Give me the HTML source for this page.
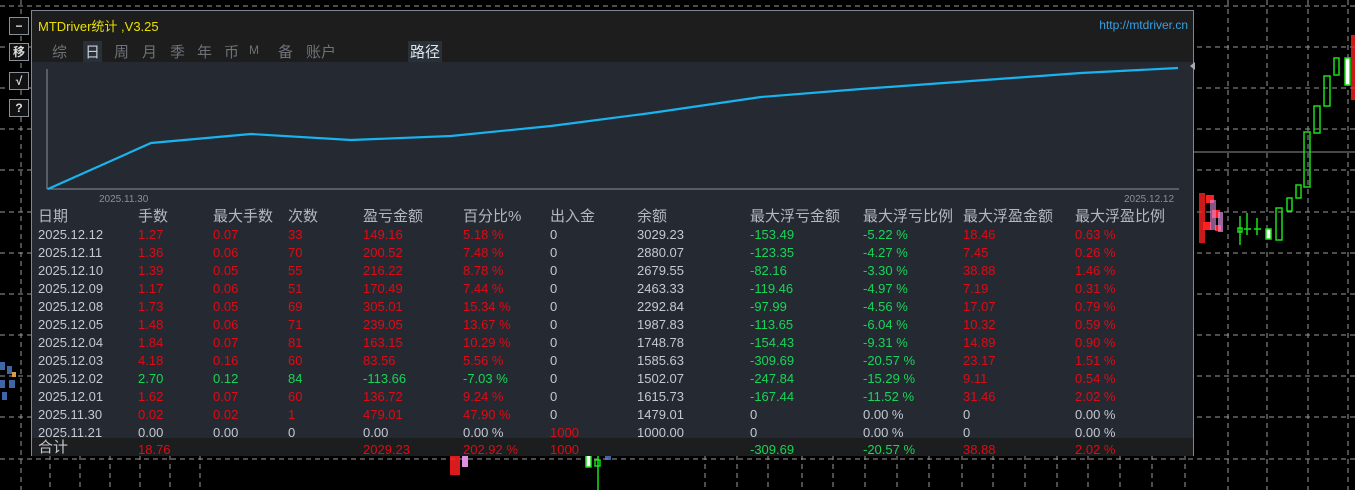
<!DOCTYPE html>
<html><head><meta charset="utf-8">
<style>
*{margin:0;padding:0;box-sizing:border-box}
body{width:1355px;height:490px;background:#000;position:relative;overflow:hidden;font-family:"Liberation Sans","Noto Sans CJK SC",sans-serif}
#bg{position:absolute;left:0;top:0}
.btn{position:absolute;left:9px;width:20px;height:18px;border:1px solid #8a9099;background:#111;color:#ddd;font-size:12px;text-align:center;line-height:16px;font-weight:bold}
#panel{position:absolute;left:31px;top:10px;width:1163px;height:446px;background:#252a32;border:1px solid #7e8894}
#hdr{position:absolute;left:0;top:0;width:100%;height:51px;background:#1d1d1e}
.title{position:absolute;left:6px;top:5px;color:#e8e000;font-size:13px}
.url{position:absolute;right:5px;top:7px;color:#3aa0e0;font-size:12px}
.tabs{position:absolute;left:0;top:30px;font-size:15px;color:#6e7278}
.tabs span{position:absolute;top:0;white-space:nowrap}
.sel{background:#2a3038;color:#c8ccd4;padding:0 2px}
.row{position:absolute;left:0;width:100%;height:18px;font-size:13px;line-height:18px}
.row span{position:absolute;top:0;white-space:nowrap}
.row span:nth-child(1){left:6px}.row span:nth-child(2){left:106px}.row span:nth-child(3){left:181px}
.row span:nth-child(4){left:256px}.row span:nth-child(5){left:331px}.row span:nth-child(6){left:431px}
.row span:nth-child(7){left:518px}.row span:nth-child(8){left:605px}.row span:nth-child(9){left:718px}
.row span:nth-child(10){left:831px}.row span:nth-child(11){left:931px}.row span:nth-child(12){left:1043px}
.h{font-size:15px;color:#b4b8c0}
.w{color:#c4c8d0}.r{color:#e00a14}.g{color:#18d458}
.tot{background:#1c1d1f}
</style></head><body>
<svg id="bg" width="1355" height="490">
<g stroke="#9a9a9a" stroke-width="1" stroke-dasharray="5,4">
<line x1="0" y1="6" x2="1355" y2="6"/><line x1="0" y1="47" x2="1355" y2="47"/><line x1="0" y1="88" x2="1355" y2="88"/><line x1="0" y1="129" x2="1355" y2="129"/><line x1="0" y1="170" x2="1355" y2="170"/><line x1="0" y1="212" x2="1355" y2="212"/><line x1="0" y1="253" x2="1355" y2="253"/><line x1="0" y1="294" x2="1355" y2="294"/><line x1="0" y1="335" x2="1355" y2="335"/><line x1="0" y1="376" x2="1355" y2="376"/><line x1="0" y1="417" x2="1355" y2="417"/><line x1="0" y1="459" x2="1355" y2="459"/>
<line x1="21" y1="0" x2="21" y2="490"/><line x1="1228" y1="0" x2="1228" y2="490"/><line x1="1267" y1="0" x2="1267" y2="490"/><line x1="1308" y1="0" x2="1308" y2="490"/><line x1="1348" y1="0" x2="1348" y2="490"/>
<line x1="705" y1="455" x2="705" y2="490"/><line x1="737" y1="455" x2="737" y2="490"/><line x1="768" y1="455" x2="768" y2="490"/><line x1="802" y1="455" x2="802" y2="490"/><line x1="833" y1="455" x2="833" y2="490"/><line x1="865" y1="455" x2="865" y2="490"/><line x1="897" y1="455" x2="897" y2="490"/><line x1="929" y1="455" x2="929" y2="490"/><line x1="962" y1="455" x2="962" y2="490"/><line x1="993" y1="455" x2="993" y2="490"/><line x1="1025" y1="455" x2="1025" y2="490"/><line x1="1057" y1="455" x2="1057" y2="490"/><line x1="1088" y1="455" x2="1088" y2="490"/><line x1="1120" y1="455" x2="1120" y2="490"/><line x1="1152" y1="455" x2="1152" y2="490"/><line x1="1185" y1="455" x2="1185" y2="490"/>
<line x1="50" y1="455" x2="50" y2="490"/><line x1="80" y1="455" x2="80" y2="490"/><line x1="110" y1="455" x2="110" y2="490"/><line x1="140" y1="455" x2="140" y2="490"/><line x1="170" y1="455" x2="170" y2="490"/><line x1="200" y1="455" x2="200" y2="490"/>
</g>
<line x1="1190" y1="152" x2="1355" y2="152" stroke="#8a8f96"/>
<g stroke="#19e019" fill="none" stroke-width="1.5">
<rect x="1238" y="228" width="4" height="4"/><line x1="1240" y1="216" x2="1240" y2="245"/>
<line x1="1247" y1="213" x2="1247" y2="235"/><line x1="1244" y1="229" x2="1251" y2="229"/>
<line x1="1257" y1="218" x2="1257" y2="235"/><line x1="1254" y1="229" x2="1261" y2="229"/>
<rect x="1266" y="229" width="5" height="10" fill="#fff"/>
<rect x="1276" y="208" width="6" height="32"/><rect x="1287" y="198" width="5" height="13"/><rect x="1296" y="185" width="5" height="13"/>
<rect x="1304" y="132" width="6" height="55"/><rect x="1314" y="106" width="6" height="27"/><rect x="1324" y="76" width="6" height="30"/><rect x="1334" y="58" width="5" height="17"/>
<rect x="1345" y="58" width="5" height="27" fill="#fff"/>
<rect x="586" y="455" width="5" height="12" fill="#fff"/><line x1="598" y1="455" x2="598" y2="490"/><rect x="595" y="460" width="5" height="6"/>
</g>
<g fill="#ff2020"><rect x="1199" y="193" width="6" height="50" opacity=".8"/><rect x="1206" y="195" width="8" height="8"/><rect x="1212" y="210" width="8" height="8"/><rect x="1203" y="222" width="8" height="8"/><rect x="1215" y="225" width="6" height="6"/><rect x="1351" y="35" width="4" height="65" opacity=".8"/><rect x="450" y="455" width="10" height="20" opacity=".85"/></g>
<g fill="#e090e0"><rect x="1210" y="200" width="6" height="30" opacity=".6"/><rect x="1218" y="212" width="5" height="20" opacity=".7"/><rect x="462" y="455" width="6" height="12"/></g>
<g fill="#5080d0" opacity=".8"><rect x="0" y="362" width="5" height="8"/><rect x="7" y="366" width="5" height="8"/><rect x="0" y="380" width="5" height="8"/><rect x="9" y="380" width="6" height="8"/><rect x="2" y="392" width="5" height="8"/><rect x="605" y="455" width="6" height="5"/></g>
<g fill="#d8a040"><rect x="12" y="372" width="4" height="5"/></g>
</svg>
<div class="btn" style="top:17px">−</div>
<div class="btn" style="top:43px;font-size:12px">移</div>
<div class="btn" style="top:72px">√</div>
<div class="btn" style="top:99px">?</div>

<div id="panel">
<div id="hdr">
<div class="title">MTDriver统计 ,V3.25</div>
<div class="url">http://mtdriver.cn</div>
<div class="tabs">
<span style="left:20px">综</span><span class="sel" style="left:51px">日</span><span style="left:82px">周</span><span style="left:110px">月</span><span style="left:138px">季</span><span style="left:165px">年</span><span style="left:192px">币</span><span style="left:217px;font-size:12px;top:2px">M</span><span style="left:246px">备</span><span style="left:274px">账户</span><span class="sel" style="left:376px;color:#e0e4ea">路径</span>
</div>
</div>
<svg style="position:absolute;left:0;top:51px" width="1163" height="150">
<line x1="15" y1="7" x2="15" y2="127" stroke="#8a8f96"/>
<line x1="15" y1="127" x2="1147" y2="127" stroke="#8a8f96"/>
<polyline fill="none" stroke="#18b4f0" stroke-width="2.2" points="16,127 119,81 219,72 319,78 419,74 519,64 619,51 729,35 829,27 939,19 1049,11 1146,6"/>
<polygon points="1163,0 1158,4 1163,8" fill="#aaa"/>
<text x="67" y="140" fill="#8a8f96" font-size="10" font-family="Liberation Sans">2025.11.30</text>
<text x="1092" y="140" fill="#8a8f96" font-size="10" font-family="Liberation Sans">2025.12.12</text>
</svg>
<div class="row h" style="top:197px"><span>日期</span><span>手数</span><span>最大手数</span><span>次数</span><span>盈亏金额</span><span>百分比%</span><span>出入金</span><span>余额</span><span>最大浮亏金额</span><span>最大浮亏比例</span><span>最大浮盈金额</span><span>最大浮盈比例</span></div>
<div class="row" style="top:215px"><span class="w">2025.12.12</span><span class="r">1.27</span><span class="r">0.07</span><span class="r">33</span><span class="r">149.16</span><span class="r">5.18 %</span><span class="w">0</span><span class="w">3029.23</span><span class="g">-153.49</span><span class="g">-5.22 %</span><span class="r">18.46</span><span class="r">0.63 %</span></div>
<div class="row" style="top:233px"><span class="w">2025.12.11</span><span class="r">1.36</span><span class="r">0.06</span><span class="r">70</span><span class="r">200.52</span><span class="r">7.48 %</span><span class="w">0</span><span class="w">2880.07</span><span class="g">-123.35</span><span class="g">-4.27 %</span><span class="r">7.45</span><span class="r">0.26 %</span></div>
<div class="row" style="top:251px"><span class="w">2025.12.10</span><span class="r">1.39</span><span class="r">0.05</span><span class="r">55</span><span class="r">216.22</span><span class="r">8.78 %</span><span class="w">0</span><span class="w">2679.55</span><span class="g">-82.16</span><span class="g">-3.30 %</span><span class="r">38.88</span><span class="r">1.46 %</span></div>
<div class="row" style="top:269px"><span class="w">2025.12.09</span><span class="r">1.17</span><span class="r">0.06</span><span class="r">51</span><span class="r">170.49</span><span class="r">7.44 %</span><span class="w">0</span><span class="w">2463.33</span><span class="g">-119.46</span><span class="g">-4.97 %</span><span class="r">7.19</span><span class="r">0.31 %</span></div>
<div class="row" style="top:287px"><span class="w">2025.12.08</span><span class="r">1.73</span><span class="r">0.05</span><span class="r">69</span><span class="r">305.01</span><span class="r">15.34 %</span><span class="w">0</span><span class="w">2292.84</span><span class="g">-97.99</span><span class="g">-4.56 %</span><span class="r">17.07</span><span class="r">0.79 %</span></div>
<div class="row" style="top:305px"><span class="w">2025.12.05</span><span class="r">1.48</span><span class="r">0.06</span><span class="r">71</span><span class="r">239.05</span><span class="r">13.67 %</span><span class="w">0</span><span class="w">1987.83</span><span class="g">-113.65</span><span class="g">-6.04 %</span><span class="r">10.32</span><span class="r">0.59 %</span></div>
<div class="row" style="top:323px"><span class="w">2025.12.04</span><span class="r">1.84</span><span class="r">0.07</span><span class="r">81</span><span class="r">163.15</span><span class="r">10.29 %</span><span class="w">0</span><span class="w">1748.78</span><span class="g">-154.43</span><span class="g">-9.31 %</span><span class="r">14.89</span><span class="r">0.90 %</span></div>
<div class="row" style="top:341px"><span class="w">2025.12.03</span><span class="r">4.18</span><span class="r">0.16</span><span class="r">60</span><span class="r">83.56</span><span class="r">5.56 %</span><span class="w">0</span><span class="w">1585.63</span><span class="g">-309.69</span><span class="g">-20.57 %</span><span class="r">23.17</span><span class="r">1.51 %</span></div>
<div class="row" style="top:359px"><span class="w">2025.12.02</span><span class="g">2.70</span><span class="g">0.12</span><span class="g">84</span><span class="g">-113.66</span><span class="g">-7.03 %</span><span class="w">0</span><span class="w">1502.07</span><span class="g">-247.84</span><span class="g">-15.29 %</span><span class="r">9.11</span><span class="r">0.54 %</span></div>
<div class="row" style="top:377px"><span class="w">2025.12.01</span><span class="r">1.62</span><span class="r">0.07</span><span class="r">60</span><span class="r">136.72</span><span class="r">9.24 %</span><span class="w">0</span><span class="w">1615.73</span><span class="g">-167.44</span><span class="g">-11.52 %</span><span class="r">31.46</span><span class="r">2.02 %</span></div>
<div class="row" style="top:395px"><span class="w">2025.11.30</span><span class="r">0.02</span><span class="r">0.02</span><span class="r">1</span><span class="r">479.01</span><span class="r">47.90 %</span><span class="w">0</span><span class="w">1479.01</span><span class="w">0</span><span class="w">0.00 %</span><span class="w">0</span><span class="w">0.00 %</span></div>
<div class="row" style="top:413px"><span class="w">2025.11.21</span><span class="w">0.00</span><span class="w">0.00</span><span class="w">0</span><span class="w">0.00</span><span class="w">0.00 %</span><span class="r">1000</span><span class="w">1000.00</span><span class="w">0</span><span class="w">0.00 %</span><span class="w">0</span><span class="w">0.00 %</span></div>
<div class="row tot" style="top:427px;height:18px;padding-top:0"><span class="w" style="font-size:15px;top:1px">合计</span><span class="r" style="top:3px">18.76</span><span></span><span></span><span class="r" style="top:3px">2029.23</span><span class="r" style="top:3px">202.92 %</span><span class="r" style="top:3px">1000</span><span></span><span class="g" style="top:3px">-309.69</span><span class="g" style="top:3px">-20.57 %</span><span class="r" style="top:3px">38.88</span><span class="r" style="top:3px">2.02 %</span></div>
</div>
</body></html>
